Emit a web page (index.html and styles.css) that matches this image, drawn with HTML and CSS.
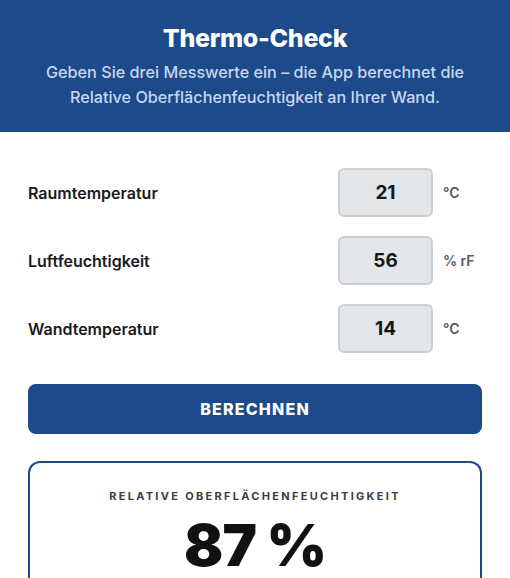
FILE: index.html
```html
<!DOCTYPE html>
<html lang="de">
<head>
<meta charset="utf-8">
<title>Thermo-Check</title>
<link rel="stylesheet" href="styles.css">
</head>
<body>
<header class="hero">
  <h1 class="title">Thermo-Check</h1>
  <p class="subtitle">Geben Sie drei Messwerte ein – die App berechnet die<br>Relative Oberflächenfeuchtigkeit an Ihrer Wand.</p>
</header>
<main class="content">
  <div class="fields">
    <div class="row">
      <label class="label">Raumtemperatur</label>
      <div class="input">21</div>
      <span class="unit">°C</span>
    </div>
    <div class="row">
      <label class="label">Luftfeuchtigkeit</label>
      <div class="input">56</div>
      <span class="unit">% rF</span>
    </div>
    <div class="row">
      <label class="label">Wandtemperatur</label>
      <div class="input">14</div>
      <span class="unit">°C</span>
    </div>
  </div>
  <button class="btn">BERECHNEN</button>
  <section class="result">
    <div class="result-label">RELATIVE OBERFLÄCHENFEUCHTIGKEIT</div>
    <div class="result-value">87 %</div>
  </section>
</main>
</body>
</html>
```
FILE: styles.css
```css
* { box-sizing: border-box; }
html, body { margin: 0; padding: 0; }
body {
  font-family: Inter, "Noto Sans", sans-serif;
  background: #ffffff;
  color: #1a1a1a;
  width: 510px;
  height: 578px;
  overflow: hidden;
}
.hero {
  background: #1c4a8a;
  color: #fff;
  text-align: center;
  padding: 22px 20px 22px;
  height: 132px;
}
.title {
  margin: 0;
  font-size: 25px;
  font-weight: 800;
  line-height: 32px;
  letter-spacing: -0.3px;
}
.subtitle {
  margin: 6px 0 0;
  font-size: 16.2px;
  line-height: 25px;
  color: #c9d7ee;
  font-weight: 500;
}
.content {
  padding: 36px 28px 0;
}
.fields {
  display: flex;
  flex-direction: column;
  gap: 19px;
}
.row {
  display: flex;
  align-items: center;
  height: 49px;
}
.label {
  flex: 1;
  font-size: 16px;
  font-weight: 600;
  color: #1a1a1a;
}
.input {
  width: 95px;
  height: 49px;
  background: #e2e5ea;
  border: 2px solid #cbced3;
  border-radius: 6px;
  display: flex;
  align-items: center;
  justify-content: center;
  font-size: 19px;
  font-weight: 700;
  color: #161616;
}
.unit {
  width: 49px;
  padding-left: 10px;
  font-size: 14px;
  font-weight: 600;
  color: #555a61;
}
.btn {
  display: block;
  width: 100%;
  height: 50px;
  margin-top: 31px;
  background: #1c4a8a;
  color: #fff;
  border: none;
  border-radius: 8px;
  font-family: Inter, "Noto Sans", sans-serif;
  font-size: 16px;
  font-weight: 800;
  letter-spacing: 1.2px;
}
.result {
  margin-top: 27px;
  border: 2px solid #1c4a8a;
  border-bottom: none;
  border-radius: 12px 12px 0 0;
  padding: 26px 16px 0;
  text-align: center;
  height: 118px;
}
.result-label {
  font-size: 11px;
  font-weight: 700;
  letter-spacing: 2.3px;
  color: #3e3e3e;
  line-height: 14px;
}
.result-value {
  margin-top: 10px;
  font-size: 58px;
  font-weight: 900;
  line-height: 64px;
  color: #111;
  letter-spacing: -1px;
}
```
